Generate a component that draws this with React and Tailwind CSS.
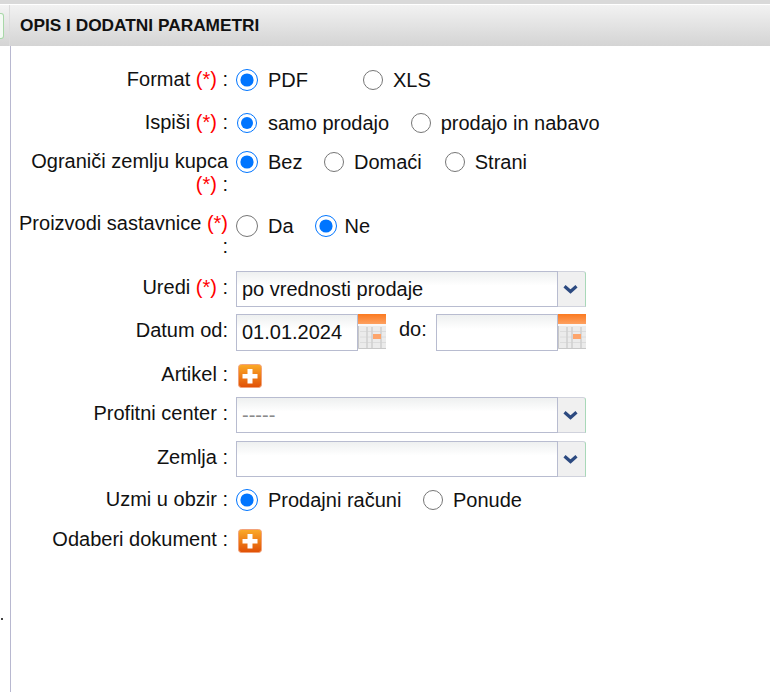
import React from 'react';

function Req() {
  return <span className="text-[#f00]">(*)</span>;
}

function Radio({ label, checked, name, big, gap = 10, className = '' }) {
  return (
    <label className={`flex items-center shrink-0 whitespace-nowrap ${className}`}>
      <input
        type="radio"
        name={name}
        defaultChecked={checked}
        className={`m-0 shrink-0 accent-[#0075ff] ${big ? 'w-[22px] h-[22px]' : 'w-[20px] h-[20px]'}`}
      />
      <span className="leading-[24px]" style={{ marginLeft: gap }}>{label}</span>
    </label>
  );
}

function Row({ label, height, children, top = 0, labelTop = 0 }) {
  return (
    <div className="flex" style={{ height }}>
      <div className="w-[228px] shrink-0 text-right leading-[23px] pl-[16px]" style={{ paddingTop: labelTop }}>{label}</div>
      <div className="ml-[8px] w-[350px] flex items-start" style={{ paddingTop: top }}>{children}</div>
    </div>
  );
}

function Select({ value, muted }) {
  return (
    <div className="flex w-[350px] h-[36px]">
      <div className={`w-[322px] border border-[#b8bcd0] bg-gradient-to-b from-[#eef0f0] to-white to-40% pl-[5px] leading-[34px] ${muted ? 'text-[#8a8a8a]' : ''}`}>
        {value}
      </div>
      <div className="w-[28px] flex items-center justify-center pr-[3px] border-y border-r border-y-[#d0d2dc] border-r-[#a8d8b8] bg-[#f0f0f0] rounded-tr-[3px]">
        <svg width="15" height="9" viewBox="0 0 15 9">
          <path d="M1.500 1.200 L7.500 6.500 L13.500 1.200" fill="none" stroke="#2c4a80" strokeWidth="3.200" />
        </svg>
      </div>
    </div>
  );
}

function CalendarIcon() {
  return (
    <svg width="28" height="36" viewBox="0 0 28 36" className="shrink-0">
      <defs>
        <linearGradient id="calTop" x1="0" y1="0" x2="0" y2="1">
          <stop offset="0" stopColor="#fb7a20" />
          <stop offset="1" stopColor="#fda060" />
        </linearGradient>
      </defs>
      <rect x="0" y="0" width="28" height="10" fill="url(#calTop)" />
      <rect x="0" y="10" width="28" height="2" fill="#f8f8f8" />
      <rect x="0" y="12" width="28" height="23" fill="#ebebeb" />
      <path d="M2 17.500H28M2 23H28M2 28.500H28" stroke="#dcdcdc" strokeWidth="1" />
      <path d="M9 13V34M14 13V34M23 13V34" stroke="#cfcfcf" strokeWidth="1.500" />
      <path d="M0.500 12V34.500H28" fill="none" stroke="#c8c8c8" strokeWidth="1" />
      <rect x="15" y="20" width="8" height="5" fill="#fda56c" />
    </svg>
  );
}

function PlusIcon() {
  return (
    <svg width="24" height="24" viewBox="0 0 24 24" className="ml-[2px]">
      <defs>
        <linearGradient id="plusBg" x1="0" y1="0" x2="0" y2="1">
          <stop offset="0" stopColor="#fbab28" />
          <stop offset="1" stopColor="#e04f06" />
        </linearGradient>
      </defs>
      <rect x="0.500" y="0.500" width="23" height="23" rx="3" fill="url(#plusBg)" stroke="#f2a27a" strokeWidth="1" />
      <path d="M9.500 5h5v5h5v4.500h-5v5h-5v-5h-5V10h5z" fill="#fff" />
    </svg>
  );
}

export default function App() {
  return (
    <div className="relative h-[692px] w-[770px] overflow-hidden bg-white text-[20px] text-[#111] font-['Liberation_Sans',Arial,sans-serif]">
      <div className="h-[4px] bg-[#d9d9d9]" />
      <div className="h-[1px] bg-white" />
      <div className="flex h-[41px]">
        <div className="w-[10px] bg-gradient-to-b from-[#f4f4f4] to-[#d4d4d4] border-r border-r-[#dcdcdc] flex items-center">
          <div className="w-[4px] h-[26px] border border-l-0 border-[#a8d8a8] rounded-r-[3px] bg-[#f4faf4]" />
        </div>
        <div className="flex-1 bg-gradient-to-b from-[#f2f2f2] to-[#d4d4d4] pl-[10px] leading-[41px] text-[17.3px] font-bold">
          OPIS I DODATNI PARAMETRI
        </div>
      </div>
      <div className="flex h-[646px]">
        <div className="relative w-[11px] shrink-0 border-r border-r-[#b8b8d0]">
          <span className="absolute left-[1px] top-[572px] w-[2px] h-[2px] bg-[#444]" />
        </div>
        <div className="ml-[-11px] pt-[22px]">
          <Row height={43} label={<>Format <Req /> :</>}>
            <Radio name="format" checked big label="PDF" />
            <Radio name="format" label="XLS" className="ml-[55px]" />
          </Row>
          <Row height={39} label={<>Ispiši <Req /> :</>}>
            <Radio name="ispisi" checked label="samo prodajo" gap={11} className="ml-[1px]" />
            <Radio name="ispisi" label="prodajo in nabavo" className="ml-[21.500px]" />
          </Row>
          <Row height={62} label={<>Ograniči zemlju kupca <Req /> :</>}>
            <Radio name="zemlja" checked big label="Bez" />
            <Radio name="zemlja" label="Domaći" className="ml-[21.500px]" />
            <Radio name="zemlja" label="Strani" className="ml-[23px]" />
          </Row>
          <Row height={59} top={2} label={<>Proizvodi sastavnice <Req /> :</>}>
            <Radio name="sast" big label="Da" />
            <Radio name="sast" checked big label="Ne" gap={8} className="ml-[21px]" />
          </Row>
          <Row height={43} labelTop={5} label={<>Uredi <Req /> :</>}>
            <Select value="po vrednosti prodaje" />
          </Row>
          <Row height={44} labelTop={5} label="Datum od:">
            <div className="flex w-[350px] h-[36px] items-start">
              <div className="w-[122px] h-[37px] border border-[#b8bcd0] bg-gradient-to-b from-[#eef0f0] to-white to-40% pl-[5px] leading-[35px]">01.01.2024</div>
              <CalendarIcon />
              <span className="ml-[13px] w-[37px] leading-[31px]">do:</span>
              <div className="w-[122px] h-[37px] border border-[#b8bcd0] bg-gradient-to-b from-[#eef0f0] to-white to-40%" />
              <CalendarIcon />
            </div>
          </Row>
          <Row height={39} top={6} labelTop={5} label="Artikel :">
            <PlusIcon />
          </Row>
          <Row height={44} labelTop={5} label="Profitni center :">
            <Select value="-----" muted />
          </Row>
          <Row height={43} labelTop={5} label="Zemlja :">
            <Select value="" />
          </Row>
          <Row height={40} top={4} labelTop={4} label="Uzmi u obzir :">
            <Radio name="obzir" checked big label="Prodajni računi" />
            <Radio name="obzir" label="Ponude" className="ml-[21.500px]" />
          </Row>
          <Row height={40} top={5} labelTop={4} label="Odaberi dokument :">
            <PlusIcon />
          </Row>
        </div>
      </div>
    </div>
  );
}
